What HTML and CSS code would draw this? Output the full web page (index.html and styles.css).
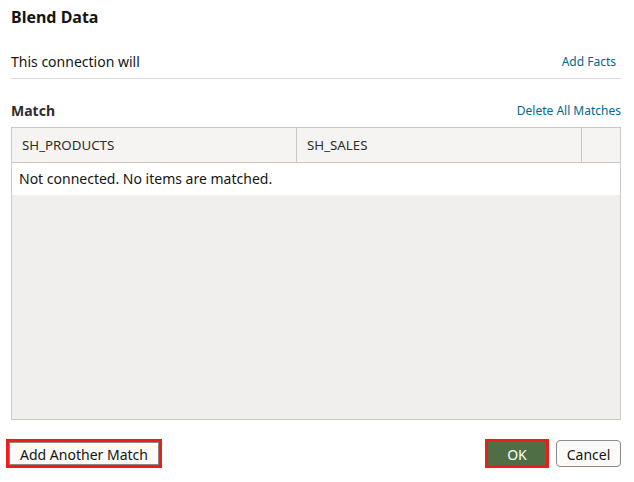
FILE: index.html
```html
<!DOCTYPE html>
<html>
<head>
<meta charset="utf-8">
<link rel="stylesheet" href="styles.css">
</head>
<body>
<div class="dialog">
  <h1 class="title">Blend Data</h1>
  <div class="row conn">
    <span class="label">This connection will</span>
    <a class="link add-facts">Add Facts</a>
  </div>
  <div class="row match-head">
    <span class="section">Match</span>
    <a class="link">Delete All Matches</a>
  </div>
  <div class="table">
    <div class="thead">
      <div class="th c1">SH_PRODUCTS</div>
      <div class="th c2">SH_SALES</div>
      <div class="th c3"></div>
    </div>
    <div class="empty">Not connected. No items are matched.</div>
    <div class="fill"></div>
  </div>
  <div class="footer">
    <button class="btn add">Add Another Match</button>
    <div class="right">
      <button class="btn ok">OK</button>
      <button class="btn cancel">Cancel</button>
    </div>
  </div>
</div>
</body>
</html>
```
FILE: styles.css
```css
* { box-sizing: border-box; }
html, body { margin: 0; padding: 0; background: #fff; }
body {
  font-family: "Noto Sans", "Open Sans", sans-serif;
  color: #161513;
  width: 634px;
  height: 482px;
  overflow: hidden;
}
.dialog {
  padding: 6px 13px 0 11px;
  display: flex;
  flex-direction: column;
}
.title {
  margin: 0;
  font-size: 16px;
  font-weight: 700;
  line-height: 22px;
}
.row {
  display: flex;
  justify-content: space-between;
}
.conn {
  margin-top: 20px;
  height: 31px;
  padding-top: 4px;
  align-items: flex-start;
  border-bottom: 1px solid #dcd9d4;
  padding-right: 5px;
  line-height: 20px;
}
.label { font-size: 14px; }
.link {
  color: #00688c;
  font-size: 12px;
  cursor: pointer;
}
.match-head {
  margin-top: 20px;
  height: 22px;
  align-items: center;
}
.section {
  font-size: 14px;
  font-weight: 700;
  color: #312d2a;
}
.table {
  margin-top: 6px;
  border: 1px solid #cbc7c2;
  height: 293px;
  display: flex;
  flex-direction: column;
  background: #f1efed;
}
.thead {
  display: flex;
  height: 35px;
  background: #f5f4f2;
  border-bottom: 1px solid #cbc7c2;
}
.th {
  font-size: 13.3px;
  color: #312d2a;
  padding-left: 10px;
  display: flex;
  align-items: center;
}
.c1 { width: 285px; border-right: 1px solid #cbc7c2; }
.c2 { width: 285px; border-right: 1px solid #cbc7c2; }
.c3 { flex: 1; }
.empty {
  background: #fff;
  height: 32px;
  font-size: 14px;
  padding-left: 7px;
  padding-bottom: 1px;
  display: flex;
  align-items: center;
  color: #161513;
}
.fill { flex: 1; }
.footer {
  margin-top: 20px;
  margin-left: -2px;
  display: flex;
  justify-content: space-between;
  align-items: center;
}
.btn {
  font-family: "Noto Sans", "Open Sans", sans-serif;
  font-size: 14px;
  color: #161513;
  background: #fbfaf9;
  border: 1px solid #8d8a86;
  border-radius: 3px;
  height: 25px;
  padding: 0;
  cursor: pointer;
}
.add {
  outline: 3px solid #ee1d1d;
  width: 150px;
  height: 23px;
  border-radius: 0;
  padding-top: 2px;
}
.right {
  display: flex;
  gap: 10px;
  align-items: center;
}
.ok {
  background: #4f6e45;
  color: #fff;
  border: 1px solid #4f6e45;
  outline: 3px solid #ee1d1d;
  width: 58px;
  height: 23px;
  border-radius: 0;
  padding-top: 2px;
}
.cancel {
  width: 65px;
  height: 27px;
  border-radius: 4px;
  padding-top: 2px;
}
```
